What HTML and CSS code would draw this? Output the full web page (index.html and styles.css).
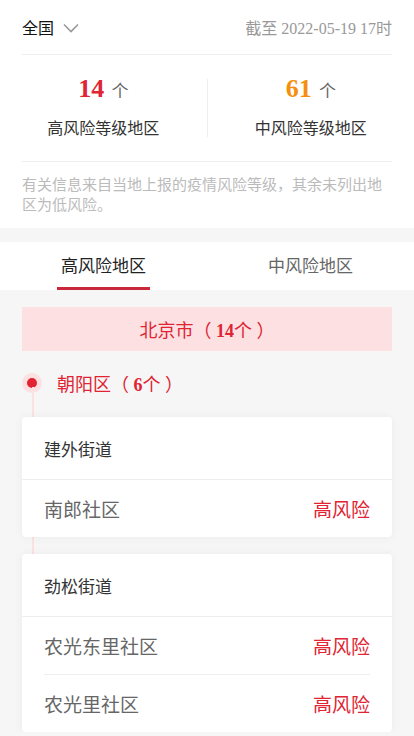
FILE: index.html
```html
<!DOCTYPE html>
<html lang="zh-CN">
<head>
  <meta charset="UTF-8" />
  <meta name="viewport" content="width=device-width, initial-scale=1.0" />
  <title>风险地区</title>
  <link rel="stylesheet" href="styles.css">
</head>
<body>

  <!-- Summary -->
  <section class="summary">
    <div class="top-bar">
      <div class="region-select">
        全国
        <svg width="16" height="10" viewBox="0 0 16 10"><path d="M1 1.5 L8 8.5 L15 1.5" fill="none" stroke="#999" stroke-width="1.6"/></svg>
      </div>
      <div class="update-time">截至 2022-05-19 17时</div>
    </div>

    <div class="stats">
      <div class="stat">
        <div class="stat-num"><b class="high">14</b> 个</div>
        <div class="stat-label">高风险等级地区</div>
      </div>
      <div class="stat">
        <div class="stat-num"><b class="mid">61</b> 个</div>
        <div class="stat-label">中风险等级地区</div>
      </div>
    </div>

    <p class="note">有关信息来自当地上报的疫情风险等级，其余未列出地区为低风险。</p>
  </section>

  <!-- Tabs -->
  <nav class="tabs">
    <div class="tab active"><span>高风险地区</span></div>
    <div class="tab"><span>中风险地区</span></div>
  </nav>

  <!-- Area List -->
  <main class="area-list">
    <div class="city"><span>北京市（&nbsp;<b>14</b>个&nbsp;）</span></div>

    <div class="district">
      <div class="district-title">
        <span class="dot"></span>
        <span>朝阳区（&nbsp;<b>6</b>个&nbsp;）</span>
      </div>

      <div class="street-card">
        <div class="street-name">建外街道</div>
        <div class="community">
          <span>南郎社区</span>
          <span class="level">高风险</span>
        </div>
      </div>

      <div class="street-card">
        <div class="street-name">劲松街道</div>
        <div class="community">
          <span>农光东里社区</span>
          <span class="level">高风险</span>
        </div>
        <div class="community">
          <span>农光里社区</span>
          <span class="level">高风险</span>
        </div>
      </div>
    </div>
  </main>

</body>
</html>
```

FILE: styles.css
```css
body {
  margin: 0;
  font-family: "Liberation Serif", "Noto Sans CJK SC", serif;
  background-color: #f6f6f6;
  color: #333;
}

.summary {
  background-color: #fff;
}

.top-bar {
  display: flex;
  justify-content: space-between;
  align-items: center;
  height: 54px;
  margin: 0 22px;
  border-bottom: 1px solid #eee;
}

.region-select {
  display: flex;
  align-items: center;
  gap: 9px;
  font-size: 16px;
  color: #111;
}

.region-select svg {
  margin-top: 2px;
}

.update-time {
  font-size: 16px;
  color: #999;
}

.stats {
  display: flex;
  padding: 24px 0 24px;
}

.stat {
  flex: 1;
  text-align: center;
}

.stat + .stat {
  border-left: 1px solid #eee;
}

.stat-num {
  font-size: 17px;
  color: #666;
  line-height: 20px;
}

.stat-num b {
  font-size: 26px;
  margin-right: 3px;
}

.high {
  color: #e02433;
}

.mid {
  color: #f5900f;
}

.stat-label {
  margin-top: 19px;
  font-size: 16px;
  line-height: 16px;
  color: #333;
}

.note {
  margin: 0 22px;
  padding: 13px 0;
  border-top: 1px solid #eee;
  font-size: 15px;
  line-height: 20px;
  color: #bbb;
}

.tabs {
  display: flex;
  margin-top: 14px;
  background-color: #fff;
  height: 48px;
}

.tab {
  flex: 1;
  display: flex;
  justify-content: center;
}

.tab span {
  display: flex;
  align-items: center;
  padding: 0 4px;
  font-size: 17px;
  color: #666;
  border-bottom: 3px solid transparent;
}

.tab.active span {
  color: #222;
  border-bottom-color: #c8283a;
}

.area-list {
  padding: 17px 22px 0;
}

.city {
  height: 44px;
  display: flex;
  justify-content: center;
  align-items: center;
  background-color: #fde0e2;
  color: #e02433;
  font-size: 18px;
}

.district {
  position: relative;
  padding-top: 16px;
}

/* timeline line */
.district::before {
  content: "";
  position: absolute;
  left: 10px;
  top: 36px;
  bottom: 0;
  width: 2px;
  background-color: #fde0e2;
}

.district-title {
  display: flex;
  align-items: center;
  height: 32px;
  font-size: 18px;
  color: #e02433;
}

.dot {
  width: 10px;
  height: 10px;
  border-radius: 50%;
  background-color: #e02433;
  border: 5px solid #fde0e2;
  margin-right: 15px;
}

.street-card {
  position: relative;
  background-color: #fff;
  border-radius: 4px;
  box-shadow: 0 0 10px rgba(0, 0, 0, 0.05);
  margin-top: 18px;
}

.street-card + .street-card {
  margin-top: 17px;
}

.street-name {
  height: 62px;
  display: flex;
  align-items: center;
  padding: 0 22px;
  font-size: 17px;
  color: #333;
  border-bottom: 1px solid #eee;
}

.community {
  height: 57px;
  display: flex;
  justify-content: space-between;
  align-items: center;
  margin: 0 22px;
  font-size: 19px;
  color: #666;
}

.community + .community {
  border-top: 1px solid #eee;
}

.level {
  color: #e02433;
}
```
